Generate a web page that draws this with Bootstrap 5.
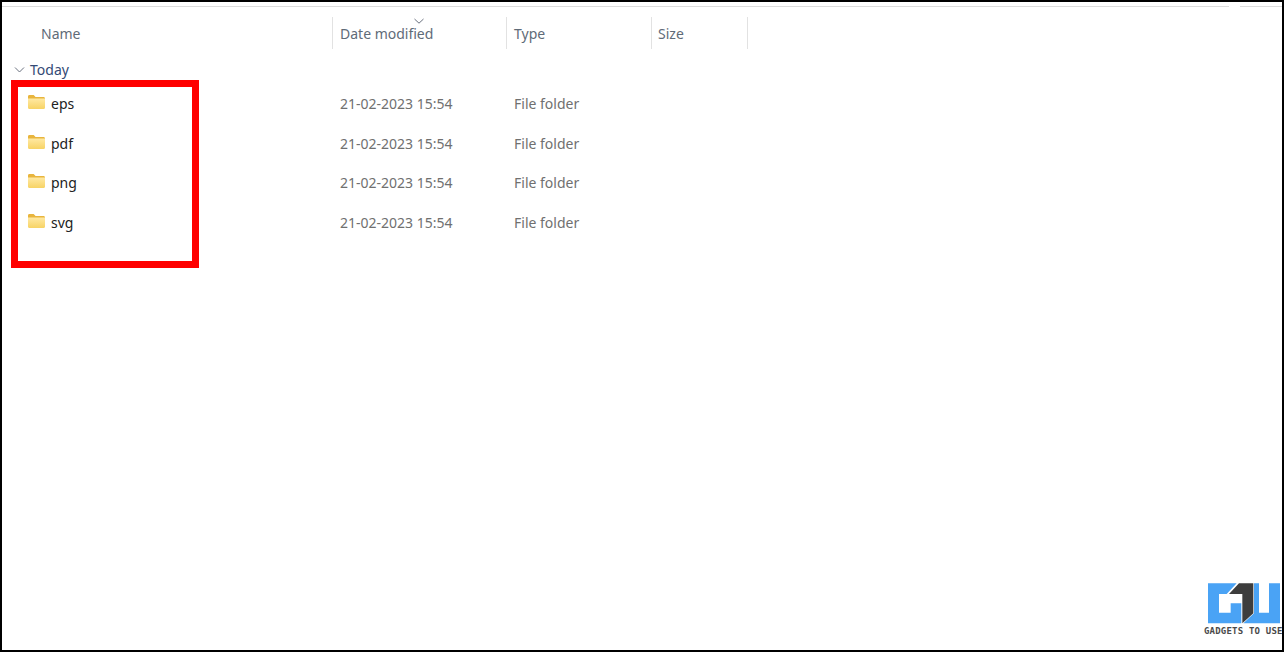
<!DOCTYPE html>
<html lang="en">
<head>
<meta charset="utf-8">
<title>Folder listing</title>
<link href="https://cdn.jsdelivr.net/npm/bootstrap@5.3.0/dist/css/bootstrap.min.css" rel="stylesheet">
<style>
html,body{height:652px;overflow:hidden;background:#fff}
body{font-family:"Noto Sans","Open Sans",sans-serif;font-size:14px}
.frame{position:relative;height:652px;border:2px solid #000;overflow:hidden}
.top-rules{height:5px;gap:10px}
.top-rules span{display:block;height:1px;background:#dcdcdc;margin-top:4px}
.rule-a{width:1227px}
.rule-b{flex:1;margin-left:1px}
.cols{display:grid;grid-template-columns:331px 174px 145px 96px}
.head{height:32px;margin-top:10px;color:#5f6b78;font-size:14px}
.head .cell{border-right:1px solid #e2e2e2;position:relative;display:flex;align-items:center;padding-left:7px;white-space:nowrap}
.head .cell:first-child{padding-left:39px}
.head .cell:last-child{padding-left:6px}
.sort-mark{position:absolute;left:80px;top:0}
.group-row{height:22px;margin-top:10px;padding-left:12px;color:#344a75;font-size:14px;line-height:22px;gap:5px}
.rows-list{padding-top:3px}
.file-row{height:39.6px;align-items:center;color:#707070;font-size:14px}
.file-row .cell{padding-left:7px;white-space:nowrap}
.file-row .cell:first-child{display:flex;align-items:center;gap:6px;padding-left:26px;color:#222}
.folder-ico{flex:none;margin-top:-3px}
.red-box{position:absolute;left:9px;top:78px;width:188px;height:188px;border:7px solid #f00}
.wm{position:absolute;right:0;bottom:14px;width:78px;height:56px}
.wm svg{display:block}
.wm-text{position:absolute;left:0;top:46px;font-family:"DejaVu Sans Mono","Liberation Mono",monospace;font-weight:700;font-size:9px;line-height:10px;color:#4a4a4a;white-space:nowrap;letter-spacing:.2px}
</style>
</head>
<body>
<div class="frame">
  <div class="top-rules d-flex"><span class="rule-a"></span><span class="rule-b"></span></div>
  <div class="cols head">
    <div class="cell">Name</div>
    <div class="cell">Date modified
      <svg class="sort-mark" width="12" height="8" viewBox="0 0 12 8"><path d="M1.500 2 6 6.200 10.500 2" fill="none" stroke="#6b7280" stroke-width="1"/></svg>
    </div>
    <div class="cell">Type</div>
    <div class="cell">Size</div>
  </div>
  <div class="group-row d-flex align-items-center">
    <svg width="11" height="8" viewBox="0 0 11 8"><path d="M1 1.500 5.500 6 10 1.500" fill="none" stroke="#6b7280" stroke-width="1"/></svg>
    <span>Today</span>
  </div>
  <div class="rows-list">
    <div class="cols file-row">
      <div class="cell"><svg class="folder-ico" width="17" height="14" viewBox="0 0 18 14" preserveAspectRatio="none"><use href="#fold"/></svg><span>eps</span></div>
      <div class="cell">21-02-2023 15:54</div><div class="cell">File folder</div><div class="cell"></div>
    </div>
    <div class="cols file-row">
      <div class="cell"><svg class="folder-ico" width="17" height="14" viewBox="0 0 18 14" preserveAspectRatio="none"><use href="#fold"/></svg><span>pdf</span></div>
      <div class="cell">21-02-2023 15:54</div><div class="cell">File folder</div><div class="cell"></div>
    </div>
    <div class="cols file-row">
      <div class="cell"><svg class="folder-ico" width="17" height="14" viewBox="0 0 18 14" preserveAspectRatio="none"><use href="#fold"/></svg><span>png</span></div>
      <div class="cell">21-02-2023 15:54</div><div class="cell">File folder</div><div class="cell"></div>
    </div>
    <div class="cols file-row">
      <div class="cell"><svg class="folder-ico" width="17" height="14" viewBox="0 0 18 14" preserveAspectRatio="none"><use href="#fold"/></svg><span>svg</span></div>
      <div class="cell">21-02-2023 15:54</div><div class="cell">File folder</div><div class="cell"></div>
    </div>
  </div>
  <div class="red-box"></div>
  <div class="wm">
    <svg width="78" height="44" viewBox="0 0 234 132">
      <path d="M12 10H98L68 42H45V98H80V70H112V130H12Z" fill="#4aa3f5"/>
      <path d="M150 10H165V98H195V10H228V130H118L150 100Z" fill="#4aa3f5"/>
      <path d="M75 42 105 10H148V100L115 130V42Z" fill="#3d3d3d"/>
    </svg>
    <div class="wm-text">GADGETS TO USE</div>
  </div>
</div>
<svg width="0" height="0" class="d-block" aria-hidden="true">
  <defs>
    <linearGradient id="fg" x1="0" y1="0" x2="0" y2="1"><stop offset="0" stop-color="#ffe9a3"/><stop offset="1" stop-color="#f7d365"/></linearGradient>
    <symbol id="fold" viewBox="0 0 18 14" preserveAspectRatio="none">
      <path d="M0 1.500C0 .7.600 0 1.400 0H6L8 2H16.500C17.300 2 18 2.700 18 3.500V4H0Z" fill="#e8b53d"/>
      <path d="M0 3.500H18V12.800C18 13.500 17.500 14 16.800 14H1.200C.5 14 0 13.500 0 12.800Z" fill="url(#fg)"/>
    </symbol>
  </defs>
</svg>
</body>
</html>
